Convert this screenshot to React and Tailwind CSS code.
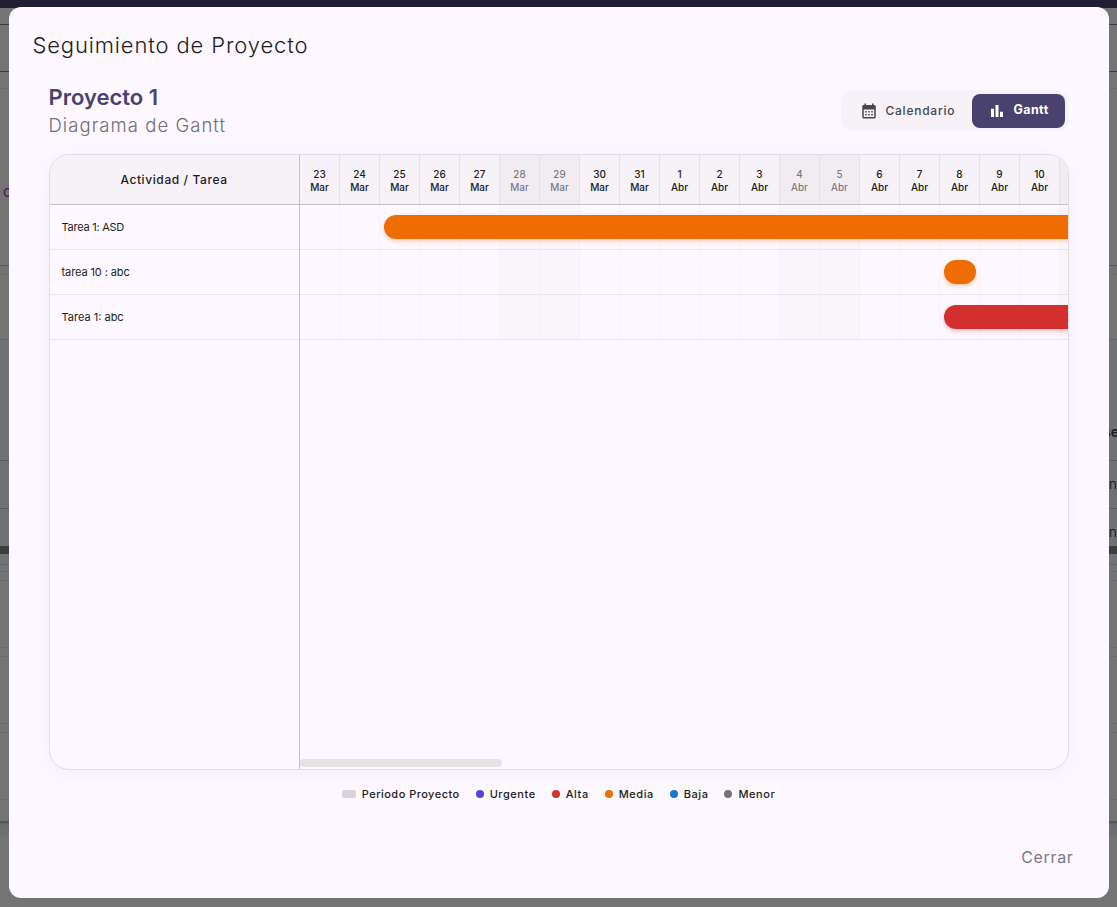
import React, { useState } from "react";
import { MdBarChart, MdCalendarMonth } from "react-icons/md";

const days = [
  [23, "Mar"],
  [24, "Mar"],
  [25, "Mar"],
  [26, "Mar"],
  [27, "Mar"],
  [28, "Mar", true],
  [29, "Mar", true],
  [30, "Mar"],
  [31, "Mar"],
  [1, "Abr"],
  [2, "Abr"],
  [3, "Abr"],
  [4, "Abr", true],
  [5, "Abr", true],
  [6, "Abr"],
  [7, "Abr"],
  [8, "Abr"],
  [9, "Abr"],
  [10, "Abr"],
  ["", "", true],
];

const DAY_WIDTH = 40;

// start: índice del día, length: duración en días
const tasks = [
  { name: "Tarea 1: ASD", start: 2, length: 30, color: "bg-[#ef6c00] shadow-[0_2px_4px_rgba(239,108,0,0.3)]", text: "tracking-[-0.25px]" },
  { name: "tarea 10 : abc", start: 16, length: 1, color: "bg-[#ef6c00] shadow-[0_2px_4px_rgba(239,108,0,0.3)]", text: "tracking-[-0.1px]" },
  { name: "Tarea 1: abc", start: 16, length: 12, color: "bg-[#d32f2f] shadow-[0_2px_4px_rgba(211,47,47,0.3)]", text: "tracking-[0px]" },
];

const legend = [
  { label: "Urgente", color: "bg-[#4f46e5]" },
  { label: "Alta", color: "bg-[#d32f2f]" },
  { label: "Media", color: "bg-[#ef6c00]" },
  { label: "Baja", color: "bg-[#1976d2]" },
  { label: "Menor", color: "bg-[#757575]" },
];

// Página que queda detrás del modal
const Background = () => (
  <div className="absolute inset-0 flex flex-col bg-[#747474] text-[14px] text-[#1d1d1f]">
    <div className="h-2 shrink-0 bg-[#211e33]" />
    <div className="h-[17px] shrink-0 border-b border-[#3c3c3e]" />
    <div className="h-[47px] shrink-0 border-b border-[#3c3c3e]" />
    <div className="h-[17px] shrink-0 border-b border-[#6b6b6b]" />
    <div className="h-[177px] shrink-0 border-b border-[#575757] pt-[92px] pl-[3px] text-[15px] text-[#4c1259]">c</div>
    <div className="h-[9px] shrink-0 border-b border-[#6b6b6b]" />
    <div className="h-[65px] shrink-0 border-b border-[#5d6973] bg-[#747572]" />
    <div className="flex h-[121px] shrink-0 items-end justify-end border-b border-[#5a5c5e] bg-[#6f7275] pb-[18px] font-semibold">
      <span className="-mr-0.5">se</span>
    </div>
    <div className="flex h-12 shrink-0 items-center justify-end border-b border-[#5a5c5e] bg-[#6f7275] pb-0.5">n</div>
    <div className="flex h-[37px] shrink-0 items-end justify-end bg-[#6f7275] pb-1">n</div>
    <div className="h-2 shrink-0 bg-[#3c3d3f]" />
    <div className="h-[11px] shrink-0 border-b border-[#52697c]" />
    <div className="h-[7px] shrink-0 border-b border-[#6b6b6b]" />
    <div className="h-[9px] shrink-0 border-b border-[#6b6b6b]" />
    <div className="h-[67px] shrink-0 border-b border-[#6b6b6b]" />
    <div className="h-[9px] shrink-0 border-b border-[#6b6b6b]" />
    <div className="h-[67px] shrink-0 border-b border-[#6b6b6b]" />
    <div className="h-[9px] shrink-0 border-b border-[#6b6b6b]" />
    <div className="h-[67px] shrink-0 border-b border-[#6b6b6b]" />
    <div className="h-[21px] shrink-0" />
    <div className="h-4 shrink-0 bg-linear-to-b from-[#515354] via-[#6c6d6d] via-25% to-[#707070]" />
    <div className="grow bg-[#747474]" />
  </div>
);

const ViewToggle = ({ view, setView }) => (
  <div className="mt-[7px] flex h-[41px] w-[228px] items-center rounded-xl bg-[#f6f2f7] px-1 text-[12px]">
    <button
      onClick={() => setView("calendario")}
      className={`flex h-[34px] w-[127px] items-center gap-2 rounded-lg pl-[15px] font-medium ${
        view === "calendario" ? "bg-[#49426f] text-white" : "text-[#47464d]"
      }`}
    >
      <MdCalendarMonth size={18} />
      <span className="tracking-[0.75px]">Calendario</span>
    </button>
    <button
      onClick={() => setView("gantt")}
      className={`flex h-[34px] w-[93px] items-center gap-2 rounded-lg pl-4 font-bold ${
        view === "gantt" ? "bg-[#49426f] text-white" : "text-[#47464d]"
      }`}
    >
      <MdBarChart size={18} />
      <span className="text-[12.5px] tracking-[0.4px]">Gantt</span>
    </button>
  </div>
);

const GanttChart = () => (
  <div className="flex h-[616px] overflow-hidden rounded-[20px] border border-[#e0dce2] bg-[#fdf8ff] shadow-[0_4px_20px_rgba(0,0,0,0.04)]">
    {/* Columna de actividades */}
    <div className="w-[250px] shrink-0 border-r border-[#c3c0c8]">
      <div className="flex h-[50px] items-center justify-center border-b border-[#c3c0c8] bg-[#f6f2f7] text-[12px] font-medium tracking-[0.6px] text-[#1c1b20]">
        Actividad / Tarea
      </div>
      {tasks.map((task, i) => (
        <div key={i} className="flex h-[45px] items-center border-b border-[#ebe6ed] pl-3 text-[11px] text-[#1c1b20]">
          <span className={task.text}>{task.name}</span>
        </div>
      ))}
    </div>

    {/* Línea de tiempo */}
    <div className="flex min-w-0 flex-1 flex-col overflow-hidden">
      <div className="flex h-[50px] shrink-0 border-b border-[#c3c0c8] bg-[#f6f2f7]">
        {days.map(([day, month, weekend]) => (
          <div
            key={`${day}-${month}`}
            className={`flex w-10 shrink-0 flex-col items-center justify-center border-r border-[#e5e1e7] pt-[2px] pl-px text-[10px] leading-[13px] ${
              weekend ? "bg-[#f0ecf1] text-[#6b696f]" : "font-medium text-[#1c1b20]"
            }`}
          >
            <span>{day}</span>
            <span>{month}</span>
          </div>
        ))}
      </div>
      {tasks.map((task, i) => (
        <div key={i} className="relative flex h-[45px] shrink-0 border-b border-[#ebe6ed]">
          {days.map(([day, month, weekend]) => (
            <div
              key={`${day}-${month}`}
              className={`w-10 shrink-0 border-r border-[#f6f1f8] ${weekend ? "bg-[#f9f5fb]" : ""}`}
            />
          ))}
          <div
            className={`absolute top-2.5 h-6 rounded-full ${task.color}`}
            style={{ left: task.start * DAY_WIDTH + 4, width: task.length * DAY_WIDTH - 8 }}
          />
        </div>
      ))}
      <div className="mt-auto mb-0.5 h-2 w-[202px] rounded-full bg-[#e6e1e5]" />
    </div>
  </div>
);

const Legend = () => (
  <div className="mt-[15px] flex h-[18px] items-center justify-center gap-4 text-[11px] font-medium text-[#1c1b20]">
    <div className="flex items-center gap-1.5">
      <span className="h-2 w-3.5 rounded-xs bg-[#d9d3e1]" />
      <span className="tracking-[0.47px]">Periodo Proyecto</span>
    </div>
    {legend.map(({ label, color }) => (
      <div key={label} className="flex items-center gap-1.5">
        <span className={`size-2 rounded-full ${color}`} />
        <span className="tracking-[0.55px]">{label}</span>
      </div>
    ))}
  </div>
);

const App = () => {
  const [view, setView] = useState("gantt");

  return (
    <div className="relative h-[907px] w-full overflow-hidden font-['Inter',sans-serif]">
      <Background />

      <div className="relative mx-auto mt-[7px] flex h-[891px] w-[1100px] flex-col rounded-xl bg-[#fdf8ff]">
        <h2 className="pt-[22px] pl-6 text-[22px] leading-8 font-light tracking-[0.86px] text-[#1c1b20]">
          Seguimiento de Proyecto
        </h2>

        <div className="flex items-start justify-between pt-[22px] pr-10 pl-10">
          <div>
            <h3 className="text-[22px] leading-7 font-semibold tracking-[0px] text-[#49426f]">Proyecto 1</h3>
            <p className="text-[18.5px] leading-7 font-light tracking-[1.05px] text-[#6f6d74]">Diagrama de Gantt</p>
          </div>
          <ViewToggle view={view} setView={setView} />
        </div>

        <div className="px-10 pt-[15px]">
          <GanttChart />
          <Legend />
        </div>

        <button className="mt-auto mr-[35px] mb-[29px] self-end text-[16px] leading-6 tracking-[0.65px] text-[#7b797f]">
          Cerrar
        </button>
      </div>
    </div>
  );
};

export default App;
